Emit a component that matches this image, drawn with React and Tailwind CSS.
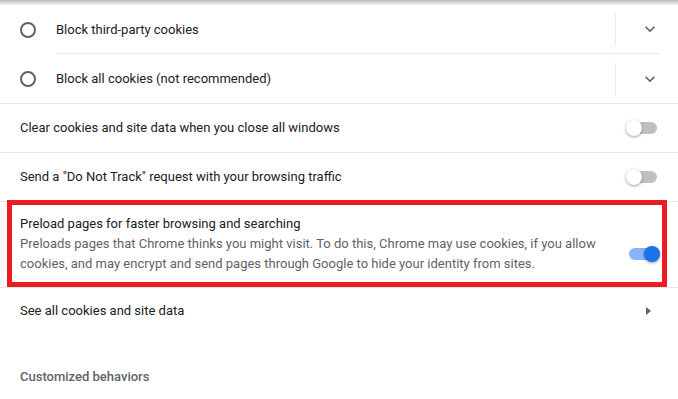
import React from "react";

const font = { fontFamily: "Roboto, 'Liberation Sans', sans-serif" };

const Radio = () => (
  <span className="w-4 h-4 rounded-full border-2 border-[#5f6368] shrink-0" />
);

const ChevronDown = () => (
  <svg width="20" height="20" viewBox="0 0 24 24" className="text-[#5f6368]">
    <path d="M7.41 8.59L12 13.17l4.59-4.58L18 10l-6 6-6-6 1.41-1.41z" fill="currentColor" />
  </svg>
);

const ArrowRight = () => (
  <svg width="20" height="20" viewBox="0 0 20 20" className="text-[#5f6368]">
    <path d="M8 6v8l5-4z" fill="currentColor" />
  </svg>
);

const Toggle = ({ on }) => (
  <div className="relative w-[34px] h-4 shrink-0">
    <div
      className={`absolute left-[3px] right-[3px] top-[2px] h-3 rounded-full ${
        on ? "bg-[#8ab4f8]" : "bg-[#bdc1c6]"
      }`}
    />
    <div
      className={`absolute top-0 w-4 h-4 rounded-full ${
        on
          ? "right-0 bg-[#1a73e8] shadow-[0_1px_3px_rgba(0,0,0,0.4)]"
          : "left-0 bg-white shadow-[0_1px_3px_rgba(0,0,0,0.4)]"
      }`}
    />
  </div>
);

const RadioRow = ({ label, last }) => (
  <div className="flex items-center h-[49px] pl-5 pr-[18px]">
    <Radio />
    <div
      className={`flex-1 flex items-center h-full ml-5 ${
        last ? "" : "border-b border-[#e8e8e8]"
      }`}
    >
      <span className="flex-1 text-[13px] leading-5 pt-px text-[#202124]">{label}</span>
      <span className="w-px h-8 bg-[#e8e8e8] mr-6" />
      <ChevronDown />
    </div>
  </div>
);

const ToggleRow = ({ label }) => (
  <div className="flex items-center h-[49px] pl-5 pr-[18px] border-b border-[#e8e8e8]">
    <span className="flex-1 text-[13px] leading-5 text-[#202124]">{label}</span>
    <Toggle on={false} />
  </div>
);

export default function App() {
  return (
    <div className="w-[678px] h-[399px] bg-white overflow-hidden" style={font}>
      <div className="h-[5px] bg-gradient-to-b from-[#b8b8b8] to-[#f4f4f4]" />

      <div className="border-b border-[#e8e8e8]">
        <RadioRow label="Block third-party cookies" />
        <RadioRow label="Block all cookies (not recommended)" last />
      </div>

      <ToggleRow label="Clear cookies and site data when you close all windows" />
      <ToggleRow label={'Send a "Do Not Track" request with your browsing traffic'} />

      <div className="relative flex items-center pl-5 pr-[18px] pt-3 pb-[13px] border-b border-[#e8e8e8]">
        <div className="flex-1 text-[13px] leading-5">
          <div className="text-[#202124]">Preload pages for faster browsing and searching</div>
          <div className="text-[#5f6368]">
            Preloads pages that Chrome thinks you might visit. To do this, Chrome may use cookies, if you allow
            <br />
            cookies, and may encrypt and send pages through Google to hide your identity from sites.
          </div>
        </div>
        <div className="mt-5">
          <Toggle on />
        </div>
        <div className="absolute left-[7px] right-[11px] top-[-2px] bottom-0 border-[5px] border-[#ed1c24] pointer-events-none" />
      </div>

      <div className="flex items-center h-[45px] pl-5 pr-[20px]">
        <span className="flex-1 text-[13px] leading-5 text-[#202124]">See all cookies and site data</span>
        <ArrowRight />
      </div>

      <div className="pl-5 pt-[34px] text-[13px] leading-5 font-medium text-[#5f6368]">
        Customized behaviors
      </div>
    </div>
  );
}
